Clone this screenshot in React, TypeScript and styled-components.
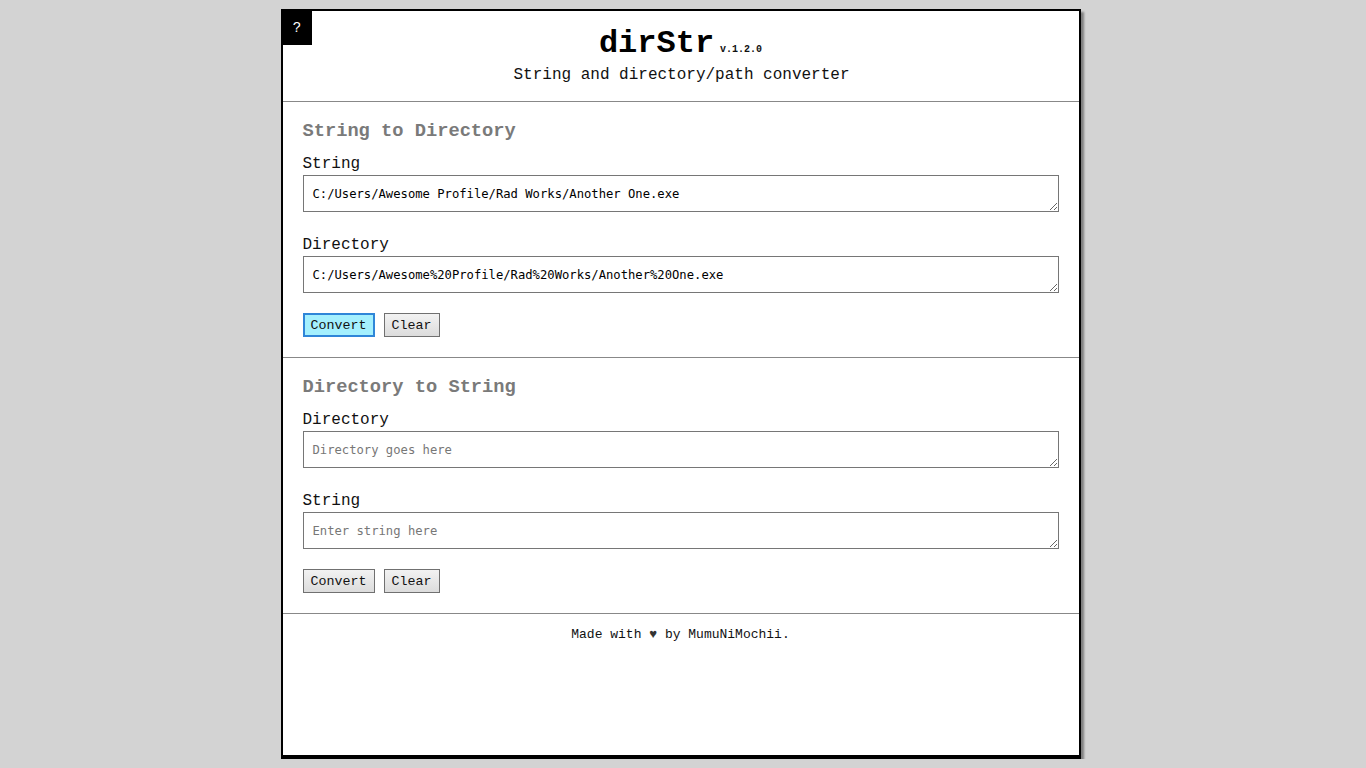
import React from "react";
import styled, { createGlobalStyle } from "styled-components";

const GlobalStyle = createGlobalStyle`
  html, body {
    margin: 0;
    padding: 0;
    background: #d3d3d3;
  }
  body {
    font-family: "Courier New", "Liberation Mono", monospace;
    color: #111;
  }
`;

const Page = styled.div`
  display: flex;
  justify-content: center;
  padding: 9px 5px 0 0;
`;

const Card = styled.main`
  position: relative;
  box-sizing: border-box;
  width: 800px;
  height: 750px;
  background: #fff;
  border: 2px solid #000;
  border-bottom-width: 4px;
  box-shadow: 3px 3px 2px #808080;
  display: flex;
  flex-direction: column;
`;

const HelpButton = styled.button`
  position: absolute;
  top: 0;
  left: 0;
  width: 29px;
  height: 34px;
  margin: 0;
  padding: 0;
  border: none;
  background: #000;
  color: #fff;
  font-family: "Courier New", "Liberation Mono", monospace;
  font-size: 14px;
  cursor: pointer;
`;

const Header = styled.header`
  display: flex;
  flex-direction: column;
  align-items: center;
  padding: 15px 0 17px;
  border-bottom: 1px solid #888;
`;

const TitleRow = styled.div`
  display: flex;
  align-items: baseline;
  gap: 6px;
`;

const Title = styled.h1`
  margin: 0;
  font-size: 32px;
  line-height: 36px;
  font-weight: bold;
  color: #000;
`;

const Version = styled.span`
  font-size: 10px;
  font-weight: bold;
  color: #111;
`;

const Subtitle = styled.p`
  margin: 4px 0 0 2px;
  font-size: 16px;
  line-height: 18px;
  color: #111;
`;

const Section = styled.section`
  display: flex;
  flex-direction: column;
  padding: 19px 20px 20px;
  border-bottom: 1px solid #888;
`;

const SectionTitle = styled.h3`
  margin: 0 0 11px;
  font-size: 18.72px;
  line-height: 21px;
  font-weight: bold;
  color: #7a7a7a;
`;

const Label = styled.label<{ $first?: boolean }>`
  margin-top: ${(p) => (p.$first ? "0" : "22px")};
  padding-top: 2px;
  margin-bottom: 2px;
  font-size: 16px;
  line-height: 18px;
  color: #111;
`;

const Field = styled.textarea`
  box-sizing: border-box;
  width: 100%;
  height: 37px;
  margin: 0;
  padding: 10px 9px 8px;
  border: 1px solid #767676;
  border-radius: 0;
  font-family: "DejaVu Sans Mono", monospace;
  font-size: 12.2px;
  line-height: 17px;
  color: #000;
  background: #fff;
  resize: vertical;
  outline: none;

  &::placeholder {
    color: #777;
  }
`;

const Actions = styled.div`
  display: flex;
  gap: 9px;
  margin-top: 20px;
`;

const Btn = styled.button<{ $active?: boolean }>`
  box-sizing: border-box;
  height: 24px;
  margin: 0;
  padding: 0 ${(p) => (p.$active ? "6px" : "7px")};
  font-family: "Courier New", "Liberation Mono", monospace;
  font-size: 13.33px;
  color: #111;
  border: ${(p) => (p.$active ? "2px solid #2f86d8" : "1px solid #707070")};
  border-radius: 0;
  background: ${(p) =>
    p.$active ? "#a4f0fe" : "linear-gradient(#f2f2f2, #dcdcdc)"};
  cursor: pointer;
`;

const Footer = styled.footer`
  display: flex;
  justify-content: center;
  padding-top: 13px;
  font-size: 13px;
  line-height: 15px;
  color: #111;
`;

const Heart = styled.span`
  color: #333;
`;

export default function App() {
  return (
    <>
      <GlobalStyle />
      <Page>
        <Card>
          <HelpButton>?</HelpButton>
          <Header>
            <TitleRow>
              <Title>dirStr</Title>
              <Version>v.1.2.0</Version>
            </TitleRow>
            <Subtitle>String and directory/path converter</Subtitle>
          </Header>

          <Section>
            <SectionTitle>String to Directory</SectionTitle>
            <Label $first>String</Label>
            <Field defaultValue="C:/Users/Awesome Profile/Rad Works/Another One.exe" />
            <Label>Directory</Label>
            <Field defaultValue="C:/Users/Awesome%20Profile/Rad%20Works/Another%20One.exe" />
            <Actions>
              <Btn $active>Convert</Btn>
              <Btn>Clear</Btn>
            </Actions>
          </Section>

          <Section>
            <SectionTitle>Directory to String</SectionTitle>
            <Label $first>Directory</Label>
            <Field placeholder="Directory goes here" />
            <Label>String</Label>
            <Field placeholder="Enter string here" />
            <Actions>
              <Btn>Convert</Btn>
              <Btn>Clear</Btn>
            </Actions>
          </Section>

          <Footer>
            <span>
              Made with <Heart>♥</Heart> by MumuNiMochii.
            </span>
          </Footer>
        </Card>
      </Page>
    </>
  );
}
